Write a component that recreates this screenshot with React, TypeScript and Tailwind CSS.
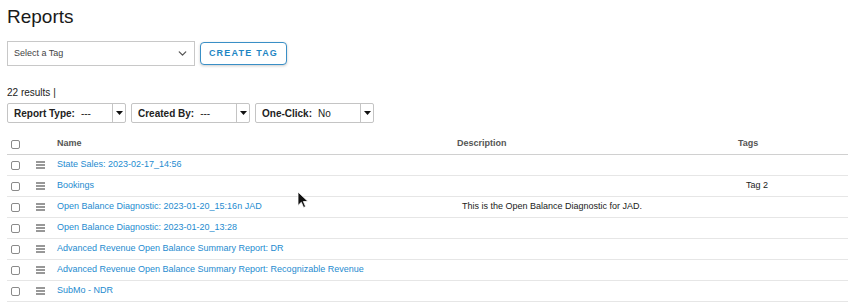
import { ChevronDown } from 'lucide-react';

type Report = {
  name: string;
  description?: string;
  tags?: string;
};

const reports: Report[] = [
  { name: 'State Sales: 2023-02-17_14:56' },
  { name: 'Bookings', tags: 'Tag 2' },
  { name: 'Open Balance Diagnostic: 2023-01-20_15:16n JAD', description: 'This is the Open Balance Diagnostic for JAD.' },
  { name: 'Open Balance Diagnostic: 2023-01-20_13:28' },
  { name: 'Advanced Revenue Open Balance Summary Report: DR' },
  { name: 'Advanced Revenue Open Balance Summary Report: Recognizable Revenue' },
  { name: 'SubMo - NDR' },
];

const Checkbox = () => (
  <span className="block h-[9px] w-[9px] rounded-[2px] border border-[#8a8a8a] bg-white" />
);

const DragHandle = () => (
  <svg width="9" height="8" viewBox="0 0 9 8" className="block">
    <path d="M0 1h9M0 4h9M0 7h9" stroke="#333" strokeWidth="1.2" />
  </svg>
);

const FilterSelect = ({ label, value }: { label: string; value: string }) => (
  <div className="flex h-[20px] w-[119px] items-center rounded-[2px] border border-[#c4c4c4] bg-white text-[10px] text-[#222]">
    <div className="flex flex-1 items-center gap-[6px] pl-[6px]">
      <span className="font-bold">{label}</span>
      <span>{value}</span>
    </div>
    <div className="flex h-full w-[13px] items-center justify-center border-l border-[#c4c4c4]">
      <svg width="7" height="4" viewBox="0 0 7 4">
        <path d="M0 0h7L3.5 4z" fill="#111" />
      </svg>
    </div>
  </div>
);

const Cursor = () => (
  <svg
    width="12"
    height="18"
    viewBox="0 0 12 18"
    className="absolute left-[297px] top-[191px]"
  >
    <path
      d="M1 1v13.5l3.3-3.2 2.3 5.2 2-.9-2.2-5.1h4.6z"
      fill="#111"
      stroke="#fff"
      strokeWidth="0.8"
      strokeLinejoin="round"
    />
  </svg>
);

const App = () => {
  return (
    <div className="relative min-h-[302px] overflow-hidden bg-white pl-[7px] pt-[5px] font-['Liberation_Sans',Arial,sans-serif] text-[#222]">
      <h1 className="text-[19px] leading-[24px] text-[#1a1a1a]">Reports</h1>

      <div className="mt-[12px] flex items-center gap-[5px]">
        <div className="flex h-[25px] w-[188px] items-center justify-between border border-[#c8c8c8] bg-white pl-[6px] pr-[5px] text-[9px] text-[#444]">
          <span>Select a Tag</span>
          <ChevronDown size={13} strokeWidth={2.4} color="#555" />
        </div>
        <button className="flex h-[23px] w-[87px] items-center justify-center rounded-[4px] border border-[#3a8fc6] bg-white text-[9px] font-bold tracking-[1.2px] text-[#1f86c4] shadow-[0_1px_3px_rgba(0,0,0,0.2)]">
          CREATE TAG
        </button>
      </div>

      <div className="mt-[21px] text-[10px] leading-[12px]">22 results |</div>

      <div className="mt-[4px] flex gap-[5px]">
        <FilterSelect label="Report Type:" value="---" />
        <FilterSelect label="Created By:" value="---" />
        <FilterSelect label="One-Click:" value="No" />
      </div>

      <div className="mt-[11px] text-[9px]">
        <div className="grid h-[21px] grid-cols-[29px_21px_400px_281px_1fr] items-center border-b border-[#d0d0d0] font-bold text-[#555]">
          <div className="pl-[4px]">
            <Checkbox />
          </div>
          <div />
          <div>Name</div>
          <div>Description</div>
          <div>Tags</div>
        </div>
        {reports.map((r) => (
          <div
            key={r.name}
            className="grid h-[21px] grid-cols-[29px_21px_400px_281px_1fr] items-center border-b border-[#e6e6e6]"
          >
            <div className="pl-[4px]">
              <Checkbox />
            </div>
            <div>
              <DragHandle />
            </div>
            <div className="text-[#1e8bcf]">{r.name}</div>
            <div className="pl-[5px] text-[#1a1a1a]">{r.description}</div>
            <div className="pl-[8px] text-[#1a1a1a]">{r.tags}</div>
          </div>
        ))}
      </div>

      <Cursor />
    </div>
  );
};

export default App;
